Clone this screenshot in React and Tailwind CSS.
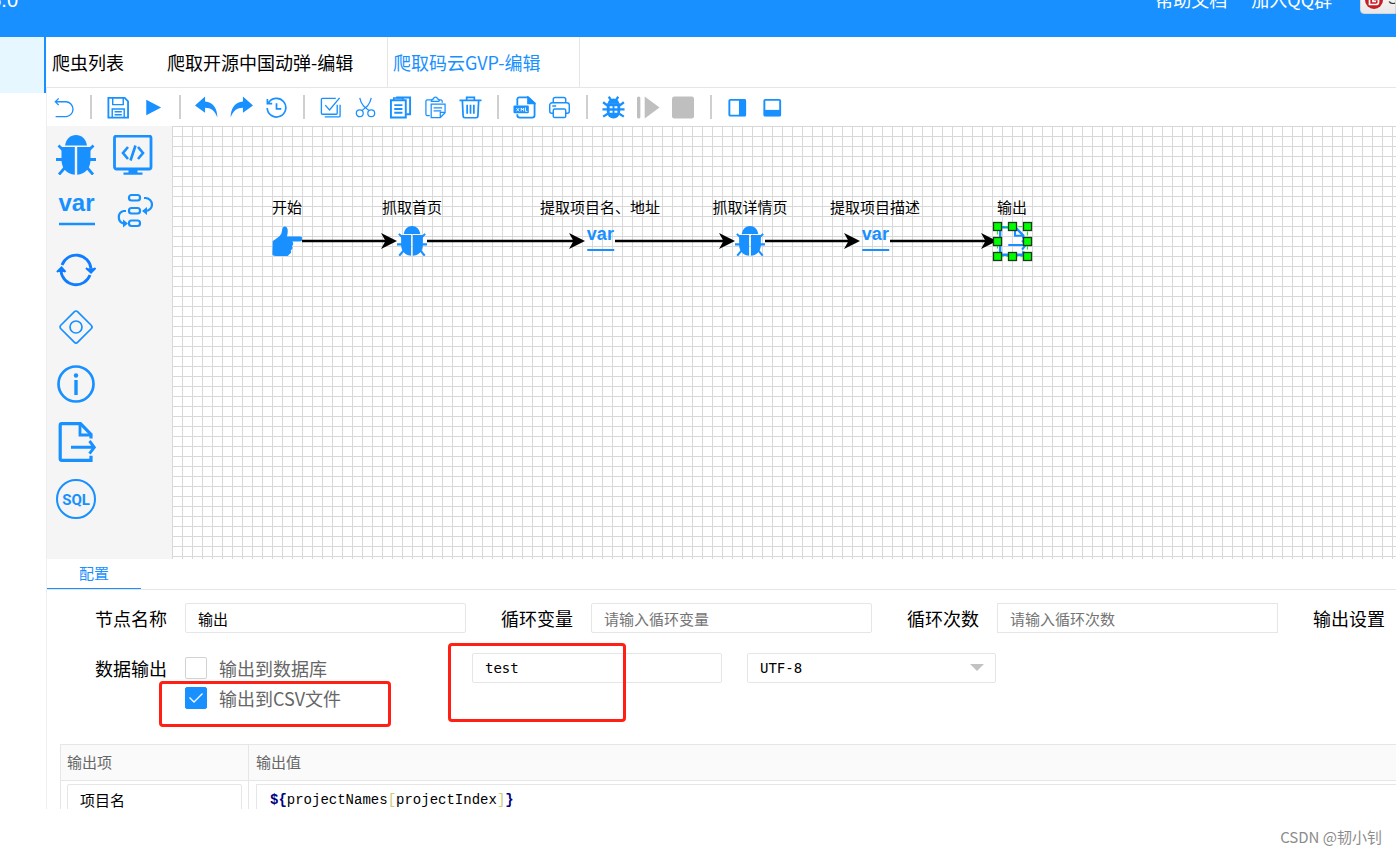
import React from "react";

const BLUE = "#1890ff";

function Svg({ size, box = 24, children, className = "", ...rest }) {
  return (
    <svg
      width={size}
      height={size}
      viewBox={`0 0 ${box} ${box}`}
      fill="none"
      stroke={BLUE}
      strokeWidth="1.4"
      aria-hidden="true"
      className={`block shrink-0 ${className}`}
      {...rest}
    >
      {children}
    </svg>
  );
}

/* Toolbar icons, 24-unit box */
const icons = {
  back: <path d="M7 2.500L3.500 6L7 9.500M3.500 6H15a7.800 7.800 0 0 1 0 15.500H3.800" />,
  save: (
    <g>
      <path d="M2.500 2h17l3.500 3.500V22.500H2.500z" strokeWidth="1.900" />
      <path d="M7 2v7h11V2M6.500 22v-8.500h12.500V22M9 16.500h7.500M9 19.500h7.500" strokeWidth="1.500" />
    </g>
  ),
  play: <path d="M5.500 3.800v16.400L21 12z" fill={BLUE} stroke="none" />,
  undo: <path d="M10.500 0.500L0 10l10.500 7.500v-5.200c6 0 10.500 3 12.800 10.500C23.500 13 19 6.500 10.500 5.800z" fill={BLUE} stroke="none" />,
  redo: <path d="M13.500 0.500L24 10l-10.500 7.500v-5.200c-6 0-10.500 3-12.800 10.500C.5 13 5 6.500 13.500 5.800z" fill={BLUE} stroke="none" />,
  history: (
    <g strokeWidth="1.800">
      <path d="M3.500 7.500A9.700 9.700 0 1 1 2.300 12.500M2.500 3v5h5M12 7.500v6h5" />
    </g>
  ),
  check: (
    <g>
      <path d="M17.500 2.500H3.500a1 1 0 0 0-1 1v14.500a1 1 0 0 0 1 1H18a1 1 0 0 0 1-1V9" />
      <path d="M6.500 9.500l4.500 5L21.500 2M22 9v11.500a1.300 1.300 0 0 1-1.300 1.300H6" />
    </g>
  ),
  cut: (
    <g strokeWidth="1.300">
      <circle cx="6" cy="18" r="3.600" />
      <circle cx="18" cy="18" r="3.600" />
      <path d="M6 2c.5 3 2 6 4 8.500l6 5M18 2c-.5 3-2 6-4 8.500l-6 5" />
    </g>
  ),
  copy: (
    <g strokeWidth="2">
      <path d="M2 4.500h15.500v18H2z" />
      <path d="M7.500 1.500h14.500v17.500h-4" />
      <path d="M5 4.500V2h9.500v2.500" strokeWidth="1.600" />
      <path d="M5.500 9.500h8.500M5.500 13.500h8.500M5.500 17.500h8.500" />
    </g>
  ),
  paste: (
    <g strokeWidth="1.300">
      <path d="M8 4H3.500a1.500 1.500 0 0 0-1.500 1.500V19a1.500 1.500 0 0 0 1.500 1.500H6M15 4h2.500A1.500 1.500 0 0 1 19 5.500V7M7 5.500h9M8 5.500c0-2 1-2.500 2-2.500 0-2.500 4-2.500 4 0 1 0 2 .5 2 2.500" />
      <path d="M7.500 8.500H22v9l-5 5H7.500zM22 17h-5v5.500M10 12.500h9M10 15.500h8" />
    </g>
  ),
  trash: (
    <g strokeWidth="1.800">
      <path d="M0.500 4.500h23M8 4V1.500h8V4M3.500 5l.8 16a1.800 1.800 0 0 0 1.700 1.700h12a1.800 1.800 0 0 0 1.700-1.700l.8-16M8.500 9v9.500M12 9v9.500M15.500 9v9.500" />
    </g>
  ),
  xml: (
    <g>
      <path d="M4.500 10V3.500A2 2 0 0 1 6.500 1.500h9.500l6.500 6V20a2.500 2.500 0 0 1-2.500 2.500h-13A2.500 2.500 0 0 1 4.500 20v-1" strokeWidth="1.900" />
      <path d="M15.500 1l7.500 7H15.500z" fill={BLUE} />
      <rect x="0.500" y="10" width="16" height="8" rx="1" fill={BLUE} stroke="none" />
      <path d="M3.500 12.500l3 3.500M6.500 12.500l-3 3.500M8.500 16v-3.500l1.300 2 1.300-2V16M13 12v4h2" stroke="#fff" strokeWidth=".9" />
    </g>
  ),
  print: (
    <g strokeWidth="1.500">
      <path d="M5.500 7V3.500a2 2 0 0 1 2-2h9a2 2 0 0 1 2 2V7M5.500 18H3.800A2 2 0 0 1 1.800 16V9.500a2.500 2.500 0 0 1 2.500-2.500h15.400a2.500 2.500 0 0 1 2.500 2.500V16a2 2 0 0 1-2 2H18.500M4.500 10.500h4" />
      <rect x="5.500" y="13.500" width="13" height="9" rx="1.500" />
    </g>
  ),
  debug: (
    <g>
      <path d="M6 8a6 5.500 0 0 1 12 0z" fill={BLUE} stroke="none" />
      <path d="M5 7.500h14V16a7 7.500 0 0 1-14 0z" fill={BLUE} stroke="none" />
      <path d="M7 0.800l2.500 3.500M17 0.800l-2.500 3.500M1.200 6.500l3.800 3h14l3.800-3M0.500 14h23M1.200 21.500L6 18.500M22.800 21.500L18 18.500" strokeWidth="2.400" />
      <path d="M8 11.700h3M13 11.700h3M8 16.500h3M13 16.500h3" stroke="#fff" strokeWidth="2" />
    </g>
  ),
  step: (
    <g fill="#bfbfbf" stroke="none">
      <rect x="0" y="0.500" width="3.500" height="23" rx="1.700" />
      <path d="M8 0.500v23L23.500 12z" />
    </g>
  ),
  stop: <rect x="0" y="0.500" width="23" height="23" rx="2.500" fill="#bfbfbf" stroke="none" />,
  right: (
    <g>
      <rect x="3.500" y="4" width="16.500" height="16.500" rx="1" strokeWidth="2" />
      <path d="M13.500 3.500H20.500V21H13.500z" fill={BLUE} stroke="none" />
    </g>
  ),
  bottom: (
    <g>
      <rect x="3.500" y="4" width="16.500" height="16.500" rx="1" strokeWidth="2" />
      <path d="M3 14.500h17.500V21H3z" fill={BLUE} stroke="none" />
    </g>
  ),
};

const toolbar = [
  [["back", "返回"]],
  [["save", "保存"], ["play", "运行"]],
  [["undo", "撤销"], ["redo", "重做"], ["history", "历史"]],
  [["check", "全选"], ["cut", "剪切"], ["copy", "复制"], ["paste", "粘贴"], ["trash", "删除"]],
  [["xml", "XML"], ["print", "打印"]],
  [["debug", "调试"], ["step", "下一步"], ["stop", "停止"]],
  [["right", "右侧面板"], ["bottom", "底部面板"]],
];

/* Node shapes, 40-unit box */
const shapes = {
  bug: (
    <g stroke="none" fill={BLUE}>
      <path d="M9 10.500C10 4 14.500 0 20 0s10 4 11 10.500z" />
      <path d="M5.500 12h13.300v27.800C10.500 39 6 33 5.500 26zM21.200 12h13.300V26c-.5 7-5 13-13.300 13.800z" />
      <path d="M2.500 10.500l5 5M37.500 10.500l-5 5M0 24.500h8M40 24.500h-8M3 39.500l6-7M37 39.500l-6-7" stroke={BLUE} strokeWidth="2.800" />
    </g>
  ),
  code: (
    <g>
      <rect x="1.500" y="1" width="36.500" height="33" rx="2" strokeWidth="2.800" />
      <path d="M15.500 34h9v3.500h5v2.300H10.500v-2.300h5z" fill={BLUE} stroke="none" />
      <path d="M15 12l-5 6 5 6M25 12l5 6-5 6M22.500 10.500l-5 15" strokeWidth="2.600" />
    </g>
  ),
  variable: (
    <g>
      <text x="20.500" y="18.500" textAnchor="middle" fontFamily="Liberation Sans, Arial, sans-serif" fontWeight="700" fontSize="24" fill={BLUE} stroke="none">var</text>
      <path d="M3 32h36" strokeWidth="2.600" />
    </g>
  ),
  flow: (
    <g strokeWidth="2.200">
      <rect x="16" y="3" width="11" height="5.500" rx="2.500" />
      <rect x="16" y="16" width="11" height="5.500" rx="2.500" />
      <rect x="16" y="28.500" width="11" height="5.500" rx="2.500" />
      <path d="M31 6h1.500a6.500 6.500 0 0 1 0 13h-2M13 19h-2.500a6.500 6.500 0 0 0 0 12.500H13" />
      <path d="M34 15l-5 4 5 4zM10 27.500l5 4-5 4z" fill={BLUE} stroke="none" />
    </g>
  ),
  loop: (
    <g stroke="#0f7dff">
      <path d="M6 15a15 15 0 0 1 29 3.500M34 25A15 15 0 0 1 5 21" strokeWidth="2.800" />
      <path d="M30 18.500l5 4.500 4.500-5zM0.500 22l5-5 4 5z" fill="#0f7dff" stroke="none" />
      <path d="M30 18l5 4.500 4.500-4.500M1 22l4.500-4.500L9.500 22" strokeWidth="2" />
    </g>
  ),
  diamond: (
    <g strokeWidth="1.700">
      <rect x="8" y="8" width="24" height="24" rx="2.500" transform="rotate(45 20 20)" />
      <circle cx="20" cy="20" r="6" />
    </g>
  ),
  info: (
    <g>
      <circle cx="20" cy="20" r="17.500" strokeWidth="2.700" />
      <path d="M20 16v15" strokeWidth="3.400" />
      <circle cx="20" cy="11.500" r="2.200" fill={BLUE} stroke="none" />
    </g>
  ),
  output: (
    <g strokeWidth="3.200">
      <path d="M35 16.500v-4L24.500 1.700H5.700a1.500 1.500 0 0 0-1.500 1.500v33.600a1.500 1.500 0 0 0 1.500 1.500H35v-4.500" />
      <path d="M24 2v11h11" strokeWidth="2.800" />
      <path d="M15 25.300h23M33.500 19l4.800 6.300-4.800 6.300" strokeWidth="2.900" />
    </g>
  ),
  sql: (
    <g>
      <circle cx="20" cy="20" r="19" strokeWidth="2" />
      <text x="20" y="25.500" textAnchor="middle" fontFamily="Roboto, Liberation Sans, sans-serif" fontWeight="700" fontSize="15" fill={BLUE} stroke="none">SQL</text>
    </g>
  ),
  hand: (
    <path
      d="M1 20C5 17 10 15 12.500 10c1-3.500 1-9.500 4.500-9.500 4 0 5 5 3 13.500h17a3.200 3.200 0 0 1 0 6.800H27c2 2 1.500 5-.5 5.700 1.500 2 1 5-1.500 5.500 1 2.500.5 5-2 5.500C22 40 20 40 17 40H4.500C2 40 .5 39 .5 37z"
      fill={BLUE}
      stroke="none"
    />
  ),
};

const palette = [
  ["bug", "抓取"],
  ["code", "脚本"],
  ["variable", "变量"],
  ["flow", "子流程"],
  ["loop", "循环"],
  null,
  ["diamond", "执行器"],
  null,
  ["info", "日志"],
  null,
  ["output", "输出"],
  null,
  ["sql", "SQL"],
];

/* Centres are measured from the canvas corner */
const nodes = [
  { x: 115, shape: "hand", label: "开始" },
  { x: 240, shape: "bug", label: "抓取首页" },
  { x: 428, shape: "variable", label: "提取项目名、地址" },
  { x: 578, shape: "bug", label: "抓取详情页" },
  { x: 703, shape: "variable", label: "提取项目描述" },
  { x: 840, shape: "output", label: "输出", selected: true },
];

const handles = [[6, 6], [21, 6], [36, 6], [6, 21], [36, 21], [6, 36], [21, 36], [36, 36]];

function Canvas() {
  return (
    <section
      aria-label="流程图"
      className="relative min-w-0 flex-1 overflow-hidden bg-white bg-[linear-gradient(to_right,#d8d8d8_1px,transparent_1px),linear-gradient(to_bottom,#d8d8d8_1px,transparent_1px)] bg-[size:10px_10px]"
    >
      <svg width="900" height="160" className="absolute top-0 left-0" aria-hidden="true">
        {nodes.slice(1).map((n, i) => (
          <g key={n.x}>
            <path d={`M${nodes[i].x + 15} 115H${n.x - 22}`} stroke="#000" strokeWidth="2.500" />
            <path d={`M${n.x - 15} 115l-16 -8l4.500 8l-4.500 8z`} fill="#000" />
          </g>
        ))}
      </svg>
      {nodes.map((n) => (
        <div
          key={n.x}
          className="absolute top-[71px] flex w-40 -translate-x-1/2 flex-col items-center gap-[9px]"
          style={{ left: n.x }}
        >
          <span className="text-[15px] leading-5 whitespace-nowrap text-black">{n.label}</span>
          <Svg size={30} box={40}>
            {shapes[n.shape]}
          </Svg>
        </div>
      ))}
      <svg width="42" height="42" className="absolute top-[94px] left-[819px]" aria-hidden="true">
        <rect x="6.500" y="6.500" width="30" height="30" fill="none" stroke="#00ff00" strokeDasharray="4 3" />
        {handles.map(([x, y]) => (
          <rect key={`${x}-${y}`} x={x - 3.5} y={y - 3.5} width="8" height="8" fill="#00ff00" stroke="#1b3a1b" strokeWidth="1.300" />
        ))}
      </svg>
    </section>
  );
}

function Field({ id, label, children }) {
  return (
    <div className="flex shrink-0 items-center">
      <label htmlFor={id} className="w-[125px] pr-[18px] text-right text-[18px] leading-[30px] whitespace-nowrap text-black">
        {label}
      </label>
      {children}
    </div>
  );
}

const inputBase = "block h-[30px] border border-[#e6e6e6] bg-white px-3 text-[15px] text-black outline-none placeholder:text-[#757575]";

function Check({ label, checked }) {
  return (
    <label className="flex h-[30px] items-center gap-3 text-[18px] whitespace-nowrap text-[#666]">
      <span className="relative block size-[22px]">
        <input
          type="checkbox"
          defaultChecked={checked}
          className="peer block size-[22px] appearance-none rounded-xs border border-[#d2d2d2] bg-white checked:border-[#1890ff] checked:bg-[#1890ff]"
        />
        <svg
          viewBox="0 0 22 22"
          className="pointer-events-none absolute inset-0 hidden size-[22px] peer-checked:block"
          fill="none"
          stroke="#fff"
          strokeWidth="1.300"
          aria-hidden="true"
        >
          <path d="M4.500 10.500l4.500 4.500 8.500-8.500" />
        </svg>
      </span>
      {label}
    </label>
  );
}

export default function App() {
  return (
    <div className="flex h-screen flex-col overflow-hidden bg-white font-['Noto_Sans_CJK_SC',sans-serif]">
      <header className="h-[37px] shrink-0 overflow-hidden bg-[#1890ff] text-white">
        <div className="-mt-[38px] flex h-[75px] items-center justify-between">
          <span className="flex w-[18px] justify-end font-['Liberation_Sans',sans-serif] text-[20px]">v0.5.0</span>
          <nav className="flex shrink-0 items-center text-[18px]">
            <a href="#docs" className="mr-6">帮助文档</a>
            <a href="#group" className="mr-7">加入QQ群</a>
            <a
              href="#star"
              className="flex h-7 w-9 items-center gap-[5px] overflow-hidden rounded-l-sm border border-[#d5d5d5] bg-linear-to-b from-white to-[#e8e8e8] pl-1 font-['Liberation_Sans',sans-serif] text-[15px] text-[#333]"
            >
              <svg width="18" height="18" viewBox="0 0 18 18" className="shrink-0" aria-hidden="true">
                <circle cx="9" cy="9" r="9" fill="#c71d23" />
                <path d="M13.500 4.500H7.500a3 3 0 0 0-3 3v6h6.500a2.500 2.500 0 0 0 2.500-2.500V8.500H8v2h3" fill="none" stroke="#fff" strokeWidth="1.700" />
              </svg>
              Star
            </a>
          </nav>
        </div>
      </header>

      <div className="flex min-h-0 flex-1">
        <aside className="w-[46px] shrink-0">
          <div className="h-14 border-r-2 border-[#1890ff] bg-[#e6f7ff]" />
        </aside>

        <main className="flex min-w-0 flex-1 flex-col overflow-hidden">
          <nav className="flex h-[51px] shrink-0 border-b border-[#e6e6e6] text-[18px] leading-[50px] whitespace-nowrap text-black">
            <a href="#list" className="w-[115px] pl-[6px]">爬虫列表</a>
            <a href="#osc" className="w-[226px] pl-[6px]">爬取开源中国动弹-编辑</a>
            <a href="#gvp" className="w-[193px] border-x border-[#e6e6e6] pl-[5px] text-[#1890ff]">爬取码云GVP-编辑</a>
          </nav>

          <div className="flex min-h-0 flex-1 flex-col overflow-hidden shadow-[inset_1px_0_0_#eeeeee]">
            <div className="flex h-[38px] shrink-0 items-center">
              {toolbar.map((group, i) => (
                <React.Fragment key={i}>
                  {i > 0 && (
                    <span className="flex w-[19px] justify-center">
                      <span className="h-6 w-[2px] bg-[#cfcfcf]" />
                    </span>
                  )}
                  {group.map(([name, title]) => (
                    <button key={name} type="button" aria-label={title} className="flex h-[38px] w-[35px] items-center justify-center">
                      <Svg size={23}>{icons[name]}</Svg>
                    </button>
                  ))}
                </React.Fragment>
              ))}
            </div>

            <div className="flex h-[433px] shrink-0 pl-px">
              <div className="w-[125px] shrink-0 bg-[#f5f5f5]">
                <div className="grid h-[402px] w-[115px] grid-cols-2 grid-rows-7">
                  {palette.map((item, i) =>
                    item ? (
                      <button key={i} type="button" aria-label={item[1]} className="flex items-center justify-center">
                        <Svg size={40} box={40}>
                          {shapes[item[0]]}
                        </Svg>
                      </button>
                    ) : (
                      <span key={i} />
                    )
                  )}
                </div>
              </div>
              <Canvas />
            </div>

            <div className="ml-px flex h-[31px] shrink-0 border-b border-[#e6e6e6]">
              <button type="button" className="h-[30px] w-[94px] border-b border-[#1890ff] text-[15px] text-[#1890ff]">
                配置
              </button>
            </div>

            <form className="relative flex shrink-0 flex-col gap-5 pt-[13px] pl-[14px]">
              <div className="flex">
                <Field id="node" label="节点名称">
                  <input id="node" defaultValue="输出" className={`${inputBase} w-[281px] rounded-xs`} />
                </Field>
                <Field id="loopvar" label="循环变量">
                  <input id="loopvar" placeholder="请输入循环变量" className={`${inputBase} w-[281px] rounded-xs`} />
                </Field>
                <Field id="loopcount" label="循环次数">
                  <input id="loopcount" placeholder="请输入循环次数" className={`${inputBase} w-[281px]`} />
                </Field>
                <Field id="outset" label="输出设置">
                  <input id="outset" className={`${inputBase} w-[281px] rounded-xs`} />
                </Field>
              </div>

              <div className="flex items-start">
                <span className="w-[125px] pr-[18px] text-right text-[18px] leading-[30px] text-black">数据输出</span>
                <div className="w-[287px]">
                  <Check label="输出到数据库" checked={false} />
                  <Check label="输出到CSV文件" checked />
                </div>
                <input
                  aria-label="文件名"
                  defaultValue="test"
                  className="mr-[25px] block h-[30px] w-[250px] rounded-xs border border-[#e6e6e6] bg-white px-3 font-['DejaVu_Sans_Mono','Liberation_Mono',monospace] text-[14px] text-black outline-none"
                />
                <div className="relative">
                  <select
                    aria-label="编码"
                    defaultValue="UTF-8"
                    className="block h-[30px] w-[249px] appearance-none rounded-xs border border-[#e6e6e6] bg-white px-3 font-['DejaVu_Sans_Mono','Liberation_Mono',monospace] text-[14px] text-black outline-none"
                  >
                    <option>UTF-8</option>
                    <option>GBK</option>
                  </select>
                  <svg width="14" height="7" className="pointer-events-none absolute top-[11px] right-3" aria-hidden="true">
                    <path d="M0 0h14l-7 7z" fill="#c2c2c2" />
                  </svg>
                </div>
              </div>

              <div className="pointer-events-none absolute top-[91px] left-[113px] h-[46px] w-[232px] rounded-sm border-3 border-[#ff1f14]" />
              <div className="pointer-events-none absolute top-[53px] left-[402px] h-[79px] w-[178px] rounded-sm border-3 border-[#ff1f14]" />
            </form>

            <div className="mt-[31px] pl-[14px]">
              <table className="w-full table-fixed border-separate border-spacing-0 border-t border-l border-[#e6e6e6] text-left text-[15px]">
                <thead>
                  <tr className="h-9 bg-[#fafafa] text-[#666]">
                    <th className="w-[188px] border-r border-b border-[#e6e6e6] px-[6px] font-normal">输出项</th>
                    <th className="border-b border-[#e6e6e6] px-[7px] font-normal">输出值</th>
                  </tr>
                </thead>
                <tbody>
                  <tr>
                    <td className="border-r border-b border-[#e6e6e6] px-[6px] py-[3px]">
                      <input aria-label="输出项" defaultValue="项目名" className={`${inputBase} w-full rounded-xs`} />
                    </td>
                    <td className="border-b border-[#e6e6e6] py-[3px] pl-[7px]">
                      <div className="h-[30px] border-t border-l border-[#e6e6e6] pl-[13px] font-['Liberation_Mono','DejaVu_Sans_Mono',monospace] text-[14px] leading-[30px] text-black">
                        <b className="text-[#000080]">{"${"}</b>projectNames<span className="text-[#cccc7a]">[</span>projectIndex<span className="text-[#cccc7a]">]</span>
                        <b className="text-[#000080]">{"}"}</b>
                      </div>
                    </td>
                  </tr>
                </tbody>
              </table>
            </div>
          </div>
        </main>
      </div>

      <footer className="flex h-[45px] shrink-0 items-center justify-end pt-3 pr-[14px] text-[15px] text-[#8c8c8c]">
        CSDN @韧小钊
      </footer>
    </div>
  );
}
